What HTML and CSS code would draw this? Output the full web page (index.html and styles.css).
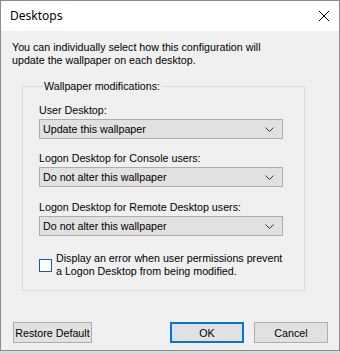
FILE: index.html
```html
<!DOCTYPE html>
<html>
<head>
<meta charset="utf-8">
<link rel="stylesheet" href="styles.css">
</head>
<body>
<div class="window">
  <div class="titlebar">
    <span class="title">Desktops</span>
    <svg class="close" width="12" height="12" viewBox="0 0 12 12"><path d="M1 1 L11 11 M11 1 L1 11" stroke="#000" stroke-width="1" fill="none"/></svg>
  </div>
  <div class="content">
    <p class="intro">You can individually select how this configuration will<br>update the wallpaper on each desktop.</p>
    <fieldset class="group">
      <legend>Wallpaper modifications:</legend>
      <div class="field f1">
        <div class="label">User Desktop:</div>
        <div class="combo"><span>Update this wallpaper</span><svg class="chev" width="9" height="5" viewBox="0 0 9 5"><path d="M0.5 0.5 L4.5 4.5 L8.5 0.5" stroke="#333" fill="none"/></svg></div>
      </div>
      <div class="field f2">
        <div class="label">Logon Desktop for Console users:</div>
        <div class="combo"><span>Do not alter this wallpaper</span><svg class="chev" width="9" height="5" viewBox="0 0 9 5"><path d="M0.5 0.5 L4.5 4.5 L8.5 0.5" stroke="#333" fill="none"/></svg></div>
      </div>
      <div class="field f3">
        <div class="label">Logon Desktop for Remote Desktop users:</div>
        <div class="combo"><span>Do not alter this wallpaper</span><svg class="chev" width="9" height="5" viewBox="0 0 9 5"><path d="M0.5 0.5 L4.5 4.5 L8.5 0.5" stroke="#333" fill="none"/></svg></div>
      </div>
      <div class="check">
        <span class="box"></span>
        <span class="checktext">Display an error when user permissions prevent<br>a Logon Desktop from being modified.</span>
      </div>
    </fieldset>
    <div class="buttons">
      <div class="btn restore">Restore Default</div>
      <div class="spacer"></div>
      <div class="btn ok">OK</div>
      <div class="btn cancel">Cancel</div>
    </div>
  </div>
</div>
</body>
</html>
```
FILE: styles.css
```css
html, body {
  margin: 0;
  padding: 0;
  background: #d8d8d8;
}
body {
  font-family: "Liberation Sans", Arial, sans-serif;
  font-size: 10.7px;
  color: #000;
}
.window {
  width: 340px;
  height: 351px;
  box-sizing: border-box;
  border: 1px solid #8c8c8c;
  background: #f0f0f0;
  display: flex;
  flex-direction: column;
}
.titlebar {
  height: 30px;
  background: #fff;
  display: flex;
  align-items: center;
  padding: 0 8px 0 9px;
  flex: none;
}
.title {
  font-family: "Noto Sans", "Open Sans", sans-serif;
  font-size: 12px;
  flex: 1;
  margin-top: -1px;
}
.close {
  margin-right: 1px;
}
.content {
  padding: 10px 11px 0 11px;
  display: flex;
  flex-direction: column;
}
.intro {
  margin: 0;
  line-height: 13px;
}
.group {
  margin: 13px 0 0 10px;
  width: 283px;
  box-sizing: border-box;
  border: 1px solid #dcdcdc;
  padding: 11px 21px 12px 16px;
}
.group legend {
  padding: 0 2px 0 1px;
  margin-left: 4px;
  line-height: 13px;
}
.field {
  display: flex;
  flex-direction: column;
}
.f1 {
  margin-bottom: 13px;
}
.f2 {
  margin-bottom: 14px;
}
.label {
  line-height: 13px;
  margin-bottom: 2px;
  white-space: nowrap;
}
.combo {
  height: 20px;
  box-sizing: border-box;
  border: 1px solid #adadad;
  background: #e1e1e1;
  display: flex;
  align-items: center;
  padding: 0 8px 0 3px;
}
.combo span {
  flex: 1;
}
.chev {
  margin-top: 1px;
}
.check {
  display: flex;
  align-items: center;
  margin-top: 16px;
}
.box {
  width: 13px;
  height: 13px;
  box-sizing: border-box;
  border: 1px solid #1c5a9c;
  background: #fff;
  flex: none;
  margin-right: 4px;
}
.checktext {
  line-height: 13px;
  white-space: nowrap;
}
.buttons {
  display: flex;
  margin-top: 31px;
  margin-left: 1px;
}
.spacer {
  flex: 1;
}
.btn {
  height: 21px;
  box-sizing: border-box;
  border: 1px solid #adadad;
  background: #e1e1e1;
  display: flex;
  align-items: center;
  justify-content: center;
}
.restore {
  width: 79px;
}
.ok {
  width: 74px;
  border: 2px solid #0078d7;
  margin-right: 10px;
}
.cancel {
  width: 74px;
}
```
